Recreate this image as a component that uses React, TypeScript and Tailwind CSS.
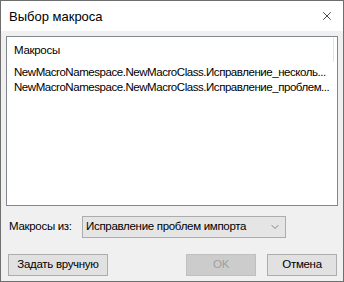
import { ChevronDown, X } from 'lucide-react'

const MACROS = [
  'NewMacroNamespace.NewMacroClass.Исправление_несколь...',
  'NewMacroNamespace.NewMacroClass.Исправление_проблем...',
]

export default function App() {
  return (
    <div className="w-[344px] h-[282px] flex flex-col border border-[#6e6e6e] bg-[#f0f0f0] text-[11.5px] tracking-[-0.3px] text-black font-['Liberation_Sans',Arial,sans-serif] overflow-hidden">
      {/* Title bar */}
      <div className="h-[30px] shrink-0 bg-white flex items-center justify-between pl-[8px] pr-[9px]">
        <span className="text-[13px] tracking-normal leading-none">Выбор макроса</span>
        <X size={14} strokeWidth={1.2} className="text-black" />
      </div>

      {/* List */}
      <div className="mx-[5px] mt-[5px] h-[170px] shrink-0 bg-white border border-[#828790] relative">
        <div className="absolute right-[3px] top-[1px] w-px h-[24px] bg-[#e3e3e3]" />
        <div className="pl-[7px] pt-[6px] leading-[15px]">Макросы</div>
        <div className="pl-[7px] pt-[7px]">
          {MACROS.map((m) => (
            <div key={m} className="leading-[15px] whitespace-nowrap tracking-[-0.45px]">
              {m}
            </div>
          ))}
        </div>
      </div>

      {/* Source */}
      <div className="mt-[10px] flex items-center pl-[8px]">
        <span className="w-[73px] whitespace-nowrap">Макросы из:</span>
        <div className="w-[204px] h-[22px] bg-[#e5e5e5] border border-[#acacac] flex items-center justify-between pl-[3px] pr-[4px]">
          <span className="whitespace-nowrap">Исправление проблем импорта</span>
          <ChevronDown size={12} strokeWidth={1.2} className="text-[#404040]" />
        </div>
      </div>

      {/* Buttons */}
      <div className="mt-[16px] flex items-center pl-[7px] pr-[6px]">
        <button className="w-[100px] h-[22px] bg-[#e1e1e1] border border-[#adadad] whitespace-nowrap">Задать вручную</button>
        <div className="flex-1" />
        <button disabled className="w-[70px] h-[22px] bg-[#cccccc] border border-[#bfbfbf] text-[#a0a0a0]">OK</button>
        <button className="ml-[11px] w-[70px] h-[22px] bg-[#e1e1e1] border border-[#adadad]">Отмена</button>
      </div>
    </div>
  )
}
